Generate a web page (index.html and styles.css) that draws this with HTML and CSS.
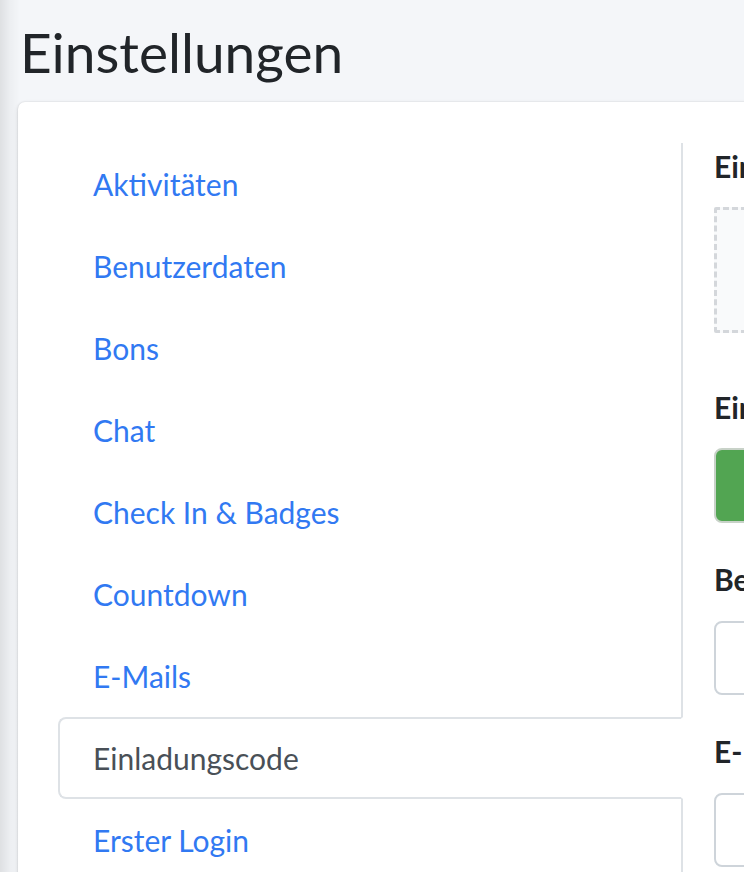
FILE: index.html
```html
<!DOCTYPE html>
<html lang="de">
<head>
<meta charset="utf-8">
<title>Einstellungen</title>
<link rel="stylesheet" href="styles.css">
</head>
<body>
<div class="page">
  <header class="content-header">
    <h1 class="page-title">Einstellungen</h1>
  </header>
  <section class="card">
    <div class="card-body">
      <nav class="side-nav">
        <a class="nav-link" href="#">Aktivitäten</a>
        <a class="nav-link" href="#">Benutzerdaten</a>
        <a class="nav-link" href="#">Bons</a>
        <a class="nav-link" href="#">Chat</a>
        <a class="nav-link" href="#">Check In &amp; Badges</a>
        <a class="nav-link" href="#">Countdown</a>
        <a class="nav-link" href="#">E-Mails</a>
        <a class="nav-link active" href="#">Einladungscode</a>
        <a class="nav-link" href="#">Erster Login</a>
      </nav>
      <div class="tab-content">
        <div class="form-group first">
          <label class="form-label">Einladungscode Bild</label>
          <div class="dropzone"></div>
        </div>
        <div class="form-group">
          <label class="form-label">Einladungscode aktiv</label>
          <div class="toggle-btn"></div>
        </div>
        <div class="form-group">
          <label class="form-label">Beschreibung</label>
          <input class="form-control" type="text">
        </div>
        <div class="form-group">
          <label class="form-label">E-Mail Betreff</label>
          <input class="form-control" type="text">
        </div>
      </div>
    </div>
  </section>
</div>
</body>
</html>
```
FILE: styles.css
```css
html, body {
  margin: 0;
  padding: 0;
}
body {
  background: #f4f6f9;
  font-family: "Lato", "Liberation Sans", sans-serif;
  color: #212529;
  overflow: hidden;
  width: 744px;
  height: 872px;
  position: relative;
}
body::before {
  content: "";
  position: absolute;
  left: 0;
  top: 0;
  bottom: 0;
  width: 20px;
  background: linear-gradient(to right, rgba(0,0,0,0.09), rgba(0,0,0,0.03) 50%, rgba(0,0,0,0));
  z-index: 2;
  pointer-events: none;
}
.page {
  padding-left: 18px;
}
.content-header {
  height: 102px;
  padding-left: 2px;
}
.page-title {
  margin: 0;
  padding-top: 19px;
  font-size: 55px;
  font-weight: 400;
  line-height: 66px;
  color: #212529;
}
.card {
  width: 1200px;
  height: 900px;
  background: #fff;
  border-radius: 7px;
  box-shadow: 0 0 2px rgba(0,0,0,0.14), 0 2px 5px rgba(0,0,0,0.12);
}
.card-body {
  display: flex;
  padding: 41px 40px 40px 40px;
}
.side-nav {
  display: flex;
  flex-direction: column;
  width: 623px;
  border-right: 2px solid #dee2e6;
  flex-shrink: 0;
}
.nav-link {
  display: block;
  padding: 21px 33px;
  border: 2px solid transparent;
  border-radius: 8px 0 0 8px;
  font-size: 30px;
  line-height: 36px;
  color: #3179f2;
  text-decoration: none;
  margin-right: -2px;
}
.nav-link.active {
  color: #495057;
  background: #fff;
  border-color: #dee2e6 #fff #dee2e6 #dee2e6;
}
.tab-content {
  padding-left: 31px;
  width: 420px;
  flex-shrink: 0;
}
.form-group {
  display: flex;
  flex-direction: column;
  margin-bottom: 33px;
}
.form-group.first {
  margin-bottom: 51px;
}
.form-label {
  display: block;
  font-size: 30px;
  font-weight: 700;
  line-height: 46px;
  color: #212529;
  margin-bottom: 18px;
  white-space: nowrap;
}
.dropzone {
  height: 120px;
  border: 3px dashed #d4d7db;
  background: #f9fafb;
  border-radius: 2px;
}
.toggle-btn {
  height: 71px;
  background: #52a552;
  border: 2px solid #c8d2c8;
  border-radius: 8px;
}
.form-control {
  box-sizing: border-box;
  height: 74px;
  margin: 1px 0 0 0;
  border: 2px solid #ced4da;
  border-radius: 8px;
  background: #fff;
  font-size: 30px;
  padding: 0 24px;
}
```
